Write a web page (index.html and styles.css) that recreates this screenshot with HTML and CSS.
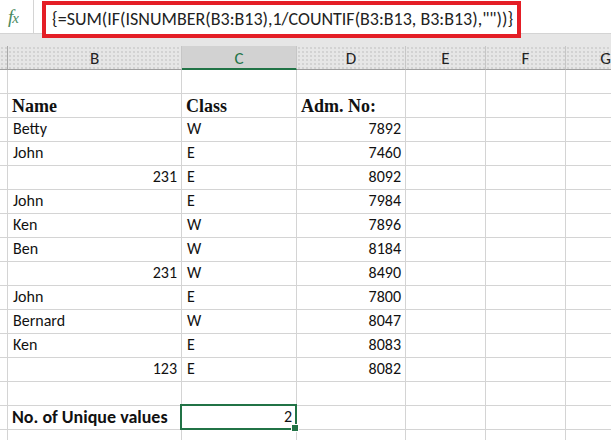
FILE: index.html
```html
<!DOCTYPE html>
<html>
<head>
<meta charset="utf-8">
<link rel="stylesheet" href="styles.css">
</head>
<body>
<div class="app">
  <div class="fbar">
    <div class="fx-cell"><span class="fx">f<span class="fx-x">x</span></span></div>
    <div class="fbox">{=SUM(IF(ISNUMBER(B3:B13),1/COUNTIF(B3:B13, B3:B13),""))}</div>
  </div>
  <div class="band"></div>
  <div class="sheet">
    <div class="grid">
      <div class="h hA"></div><div class="h">B</div><div class="h sel">C</div><div class="h">D</div><div class="h">E</div><div class="h">F</div><div class="h">G</div>

      <div class="c a"></div><div class="c"></div><div class="c"></div><div class="c"></div><div class="c"></div><div class="c"></div><div class="c"></div>
      <div class="c a"></div><div class="c hd">Name</div><div class="c hd">Class</div><div class="c hd">Adm. No:</div><div class="c"></div><div class="c"></div><div class="c"></div>
      <div class="c a"></div><div class="c">Betty</div><div class="c">W</div><div class="c r">7892</div><div class="c"></div><div class="c"></div><div class="c"></div>
      <div class="c a"></div><div class="c">John</div><div class="c">E</div><div class="c r">7460</div><div class="c"></div><div class="c"></div><div class="c"></div>
      <div class="c a"></div><div class="c r">231</div><div class="c">E</div><div class="c r">8092</div><div class="c"></div><div class="c"></div><div class="c"></div>
      <div class="c a"></div><div class="c">John</div><div class="c">E</div><div class="c r">7984</div><div class="c"></div><div class="c"></div><div class="c"></div>
      <div class="c a"></div><div class="c">Ken</div><div class="c">W</div><div class="c r">7896</div><div class="c"></div><div class="c"></div><div class="c"></div>
      <div class="c a"></div><div class="c">Ben</div><div class="c">W</div><div class="c r">8184</div><div class="c"></div><div class="c"></div><div class="c"></div>
      <div class="c a"></div><div class="c r">231</div><div class="c">W</div><div class="c r">8490</div><div class="c"></div><div class="c"></div><div class="c"></div>
      <div class="c a"></div><div class="c">John</div><div class="c">E</div><div class="c r">7800</div><div class="c"></div><div class="c"></div><div class="c"></div>
      <div class="c a"></div><div class="c">Bernard</div><div class="c">W</div><div class="c r">8047</div><div class="c"></div><div class="c"></div><div class="c"></div>
      <div class="c a"></div><div class="c">Ken</div><div class="c">E</div><div class="c r">8083</div><div class="c"></div><div class="c"></div><div class="c"></div>
      <div class="c a"></div><div class="c r">123</div><div class="c">E</div><div class="c r">8082</div><div class="c"></div><div class="c"></div><div class="c"></div>
      <div class="c a"></div><div class="c"></div><div class="c"></div><div class="c"></div><div class="c"></div><div class="c"></div><div class="c"></div>
      <div class="c a"></div><div class="c b">No. of Unique values</div><div class="c r active">2</div><div class="c"></div><div class="c"></div><div class="c"></div><div class="c"></div>
      <div class="c a"></div><div class="c"></div><div class="c"></div><div class="c"></div><div class="c"></div><div class="c"></div><div class="c"></div>
    </div>
  </div>
</div>
</body>
</html>
```

FILE: styles.css
```css
* { box-sizing: border-box; }
html, body { margin: 0; padding: 0; background: #fff; }
body { width: 611px; height: 440px; overflow: hidden; }

.app {
  display: flex;
  flex-direction: column;
  width: 611px;
  height: 440px;
  overflow: hidden;
  font-family: "Carlito", "Lato", "Liberation Sans", sans-serif;
  color: #1a1a1a;
}

.fbar {
  position: relative;
  z-index: 2;
  display: flex;
  align-items: flex-start;
  height: 34px;
  flex: none;
  background: #fff;
  border-bottom: 1px solid #d4d4d4;
}

.fx-cell {
  width: 34px;
  height: 33px;
  border-right: 1px solid #d4d4d4;
  display: flex;
  align-items: center;
  padding-left: 8px;
}

.fx {
  font-family: "Liberation Serif", serif;
  font-style: italic;
  font-size: 19px;
  color: #4a8a5e;
  letter-spacing: -1px;
  margin-top: 1px;
}
.fx-x { font-size: 15px; }

.fbox {
  margin-left: 8px;
  margin-top: 1px;
  width: 479px;
  height: 37px;
  border: 4px solid #e41e26;
  background: #fff;
  padding: 0 0 0 6px;
  font-size: 18px;
  line-height: 28px;
  white-space: nowrap;
  color: #222;
}

.band {
  height: 12px;
  flex: none;
  background: #e6e6e6;
}

.sheet {
  flex: 1;
  overflow: hidden;
}

.grid {
  display: grid;
  grid-template-columns: 8px 174px 115px 109px 80px 80px 80px;
  grid-auto-rows: 24px;
  width: 646px;
}

.h {
  background-color: #e6e6e6;
  background-image: radial-gradient(circle, #d2d2d2 0.7px, transparent 0.9px);
  background-size: 4px 4px;
  border-right: 1px solid #c6c6c6;
  border-bottom: 1px solid #9f9f9f;
  display: flex;
  align-items: center;
  justify-content: center;
  font-size: 17px;
  color: #222;
  padding-top: 1px;
}
.h.hA { border-right-color: #a8a8a8; }
.h.sel {
  background-color: #d2d2d2;
  background-image: none;
  color: #217346;
  border-bottom: 2px solid #217346;
  padding-top: 2px;
}

.c {
  border-right: 1px solid #d4d4d4;
  border-bottom: 1px solid #d4d4d4;
  display: flex;
  align-items: flex-end;
  padding: 0 4px 2px 5px;
  font-size: 16px;
  line-height: 20px;
  white-space: nowrap;
  color: #111;
}
.c.a { padding: 0; }
.c.r { justify-content: flex-end; }
.c.hd {
  font-family: "Liberation Serif", serif;
  font-weight: bold;
  font-size: 18px;
  padding-left: 4px;
  padding-bottom: 1px;
}
.c.b { font-weight: bold; font-size: 18px; padding-left: 4px; }

.c.active { position: relative; }
.c.active::before {
  content: "";
  position: absolute;
  left: -2px;
  top: -2px;
  right: -1px;
  bottom: -1px;
  border: 2px solid #217346;
}
.c.active::after {
  content: "";
  position: absolute;
  right: -3px;
  bottom: -3px;
  width: 6px;
  height: 6px;
  background: #217346;
  border: 1px solid #fff;
}
```
